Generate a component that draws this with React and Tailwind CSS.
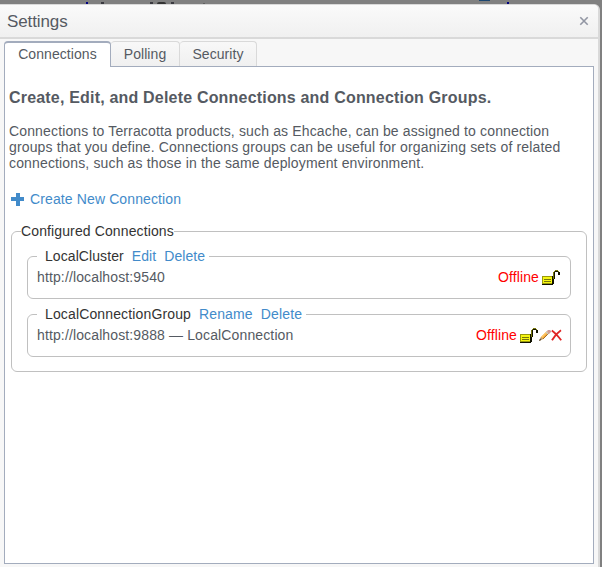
function Lock() {
  return (
    <svg width="20" height="17" viewBox="0 0 20 17" shapeRendering="crispEdges" className="block">
      <path d="M1 7h11v9H1z" fill="#111100" />
      <path d="M1 7h10v8H1z" fill="#99990c" />
      <path d="M2 8h9v6H2z" fill="#f6f612" />
      <path d="M3 10h7v1H3zM3 12h7v1H3z" fill="#77770c" />
      <path d="M12 3h1v8h-1zM13 2h1v1h-1zM14 1h3v1h-3zM17 2h1v1h-1z" fill="#77770a" />
      <path d="M11 8h1v8h-1zM12 10h1v5h-1zM13 3h1v7h-1zM14 2h3v1h-3zM17 3h1v2h-1zM18 3h1v3h-1zM17 5h1v1h-1z" fill="#111100" />
    </svg>
  );
}

function Pencil() {
  return (
    <svg width="12" height="12" viewBox="0 0 12 12" className="block">
      <path d="M0 12L2 8 8 2l2.2 2L4 10z" fill="#f2a93b" />
      <path d="M2.5 8.5L8 3" stroke="#ffc766" strokeWidth="1.4" />
      <path d="M4 10l6-6" stroke="#a86c20" strokeWidth="1" />
      <path d="M.5 11.5L2 8l2 2z" fill="#b09a7c" />
      <path d="M0 12L1 9.8l1.2 1.2z" fill="#333" />
      <path d="M8 2l1-1h2l1 1v1l-2 2z" fill="#cf9a96" />
      <path d="M7 2.7L9.3 5" stroke="#c8c8c8" strokeWidth="1.3" />
    </svg>
  );
}

function Cross() {
  return (
    <svg width="11" height="12" viewBox="0 0 11 12" className="block">
      <path d="M.8 1.5Q5 4.5 10.2 11.2M10 1.3Q4.5 5 1 11.2" fill="none" stroke="#e02424" strokeWidth="1.8" />
    </svg>
  );
}

function Connection({ name, action, url, editable }) {
  return (
    <fieldset className="h-[51px] rounded-md border border-[#c0c0c0] px-[9px]">
      <legend className={`flex h-4 gap-2 pl-2 pr-1 leading-4 text-[#333] ${editable ? "tracking-[0.14px]" : "tracking-[0.08px]"}`}>
        <span>{name}</span>
        <a className="text-[#428bca]">{action}</a>
        <a className="text-[#428bca]">Delete</a>
      </legend>
      <div className="flex h-[26px] items-center justify-between">
        <span className="tracking-[0.13px]">{url}</span>
        <span className={editable ? "-mr-px flex items-center" : "flex items-center"}>
          <span className="mr-[2px] tracking-[0.1px] text-[#ff0000]">Offline</span>
          <Lock />
          {editable && <><Pencil /><Cross /></>}
        </span>
      </div>
    </fieldset>
  );
}

export default function App() {
  return (
    <div className="flex h-[567px] w-[602px] flex-col overflow-hidden bg-[#808080] font-['Liberation_Sans',Arial,sans-serif] text-[14px] leading-4 text-[#555a62]">
      <div className="flex h-1 shrink-0 overflow-hidden">
        <i className="mt-[2px] ml-[86px] h-[2px] w-[2px] bg-[#000080]" />
        <i className="mt-[2px] ml-[13px] h-[2px] w-[3px] bg-[#3a3a40]" />
        <i className="mt-[2px] ml-[46px] h-[2px] w-[3px] bg-[#3a3a40]" />
        <i className="mt-[2px] ml-[4px] h-[2px] w-[9px] rounded-t bg-[#333]" />
        <i className="mt-[2px] ml-[5px] h-[2px] w-[3px] bg-[#3a3a40]" />
        <i className="mt-[3px] ml-[29px] h-px w-[2px] bg-[#606060]" />
        <i className="ml-[274px] h-px w-[11px] bg-[#1c4670]" />
        <i className="mt-[2px] ml-[17px] h-[2px] w-[2px] bg-[#000080]" />
      </div>
      <main className="flex w-[600px] grow flex-col rounded-tr-md border-t border-r-2 border-[#d9d9d9] bg-[#f7f7f7]">
        <header className="flex h-[34px] shrink-0 items-center justify-between rounded-tr border-b-2 border-[#d9d9d9] bg-linear-to-b from-[#fafafa] to-[#f0f0f0] pr-[9px] pl-[7px]">
          <h1 className="pt-px text-[17px] tracking-[-0.1px]">Settings</h1>
          <svg width="10" height="10" viewBox="0 0 10 10"><path d="M1.3 1.3l7.4 7.4M8.7 1.3L1.3 8.7" stroke="#9296a3" strokeWidth="1.6" /></svg>
        </header>
        <nav className="mt-[2px] ml-1 flex h-[26px] shrink-0 tracking-[0.07px]">
          <div className="z-10 w-[107px] rounded-t border border-t-2 border-b-0 border-[#a3acbd] bg-white pt-[3px] text-center">Connections</div>
          <div className="h-[25px] w-[69px] rounded-t border border-l-0 border-b-0 border-[#d9d9d9] bg-linear-to-b from-[#f8f8f8] to-[#f0f0f0] pt-1 text-center">Polling</div>
          <div className="h-[25px] w-[77px] rounded-t border border-l-0 border-b-0 border-[#d9d9d9] bg-linear-to-b from-[#f8f8f8] to-[#f0f0f0] pt-1 text-center">Security</div>
        </nav>
        <section className="-mt-px ml-1 h-[498px] w-[590px] shrink-0 border border-[#a3acbd] bg-white px-1 pt-[23px]">
          <h2 className="text-[16px] leading-4 font-bold tracking-[0.19px]">Create, Edit, and Delete Connections and Connection Groups.</h2>
          <p className="mt-[17px] leading-4 tracking-[0.147px]">Connections to Terracotta products, such as Ehcache, can be assigned to connection<br />groups that you define. Connections groups can be useful for organizing sets of related<br />connections, such as those in the same deployment environment.</p>
          <a className="mt-5 flex items-center gap-[6px] pl-[2px] tracking-[0.12px] text-[#428bca]">
            <svg width="13" height="13" viewBox="0 0 13 13"><path d="M5 0h4v4h4v4H9v5H5V8H0V4h5z" fill="#428bca" /></svg>
            Create New Connection
          </a>
          <fieldset className="mt-4 ml-[2px] flex h-[149px] w-[576px] flex-col gap-[7px] rounded-md border border-[#c0c0c0] px-[15px]">
            <legend className="-ml-[6px] h-4 tracking-[0.12px] text-[#333]">Configured Connections</legend>
            <div className="mt-[9px]"><Connection name="LocalCluster" action="Edit" url="http://localhost:9540" /></div>
            <Connection name="LocalConnectionGroup" action="Rename" url="http://localhost:9888 — LocalConnection" editable />
          </fieldset>
        </section>
      </main>
    </div>
  );
}
